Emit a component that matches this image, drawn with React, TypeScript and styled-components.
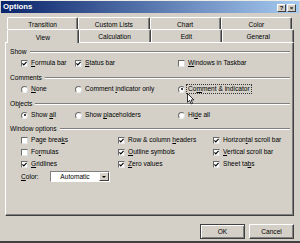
import React from "react";
import styled, { createGlobalStyle, css } from "styled-components";

const FACE = "#d4d0c8";

const GlobalStyle = createGlobalStyle`
  html, body { margin: 0; padding: 0; background: ${FACE}; }
  body {
    font-family: "Liberation Sans", Arial, sans-serif;
    font-size: 6.6px;
    color: #000;
  }
  #root { width: 300px; height: 243px; }
`;

const Window = styled.div`
  width: 300px;
  height: 243px;
  box-sizing: border-box;
  background: ${FACE};
  border-top: 1px solid #ecebe6;
  border-bottom: 2px solid #404040;
  display: flex;
  flex-direction: column;
`;

const TitleBar = styled.div`
  height: 12px;
  margin: 0 1px;
  padding: 0 3px 0 2px;
  background: linear-gradient(to right, #0a246a, #a6caf0);
  display: flex;
  align-items: center;
  justify-content: space-between;
`;

const Title = styled.span`
  color: #fff;
  font-weight: bold;
  font-size: 7.8px;
  line-height: 12px;
`;

const TitleButtons = styled.div`
  display: flex;
  gap: 1px;
  padding-top: 1px;
`;

const TitleButton = styled.div`
  width: 9px;
  height: 8px;
  box-sizing: border-box;
  background: ${FACE};
  border: 1px solid;
  border-color: #fff #404040 #404040 #fff;
  display: flex;
  align-items: center;
  justify-content: center;
  font-size: 6px;
  font-weight: bold;
  line-height: 6px;
  color: #000;
`;

const Body = styled.div`
  flex: 1;
  display: flex;
  flex-direction: column;
  padding: 4px 6px 0 5px;
`;

const TabRow = styled.div<{ $back?: boolean }>`
  display: flex;
  padding-left: 2px;
  padding-right: ${(p) => (p.$back ? 2 : 0)}px;
`;

const Tab = styled.div<{ $back?: boolean; $active?: boolean }>`
  flex: 1;
  height: ${(p) => (p.$back ? 12 : 13)}px;
  box-sizing: border-box;
  display: flex;
  align-items: center;
  justify-content: center;
  padding-top: 1px;
  background: ${FACE};
  border-top: 1px solid #fff;
  border-left: 1px solid #fff;
  border-right: 1px solid #404040;
  box-shadow: inset -1px 0 #808080;
  border-radius: 2px 2px 0 0;
  white-space: nowrap;
  ${(p) =>
    p.$active &&
    css`
      position: relative;
      z-index: 1;
      height: 14px;
      margin-bottom: -1px;
    `}
`;

const Panel = styled.div`
  height: 174px;
  box-sizing: border-box;
  border: 1px solid;
  border-color: #fff #404040 #404040 #fff;
  box-shadow: inset -1px -1px #808080;
  padding: 5px 3px 0 4px;
  display: flex;
  flex-direction: column;
`;

const GroupHeader = styled.div<{ $mt: number }>`
  display: flex;
  align-items: center;
  gap: 3px;
  height: 8px;
  line-height: 8px;
  margin-top: ${(p) => p.$mt}px;
`;

const Etch = styled.div`
  flex: 1;
  border-top: 1px solid #808080;
  border-bottom: 1px solid #fff;
`;

const OptionGrid = styled.div<{ $cols: string; $mt: number }>`
  display: grid;
  grid-template-columns: ${(p) => p.$cols};
  row-gap: 4px;
  padding-left: 11px;
  margin-top: ${(p) => p.$mt}px;
`;

const OptionLabel = styled.div`
  position: relative;
  display: flex;
  align-items: center;
  gap: 2px;
  height: 8px;
  line-height: 8px;
  white-space: nowrap;
`;

const CheckBox = styled.span`
  width: 7px;
  height: 7px;
  box-sizing: border-box;
  background: #fff;
  border: 1px solid;
  border-color: #6a6a6a #d8d8d8 #e8e8e8 #6a6a6a;
  display: flex;
  align-items: center;
  justify-content: center;
  flex: none;
`;

const Radio = styled.span`
  width: 7px;
  height: 7px;
  box-sizing: border-box;
  border-radius: 50%;
  background: #fff;
  border: 1px solid;
  border-color: #6a6a6a #e0e0e0 #f0f0f0 #6a6a6a;
  display: flex;
  align-items: center;
  justify-content: center;
  flex: none;
`;

const RadioDot = styled.span`
  width: 2px;
  height: 2px;
  border-radius: 50%;
  background: #000;
`;

const LabelText = styled.span<{ $focus?: boolean }>`
  padding: 0 1px;
  ${(p) =>
    p.$focus &&
    css`
      outline: 1px dotted #333;
      outline-offset: 0;
    `}
`;

const Cursor = styled.svg`
  position: absolute;
  left: 9px;
  top: 8px;
  z-index: 2;
`;

const ColorRow = styled.div`
  display: flex;
  align-items: center;
  margin-top: 3px;
  padding-left: 11px;
`;

const ColorLabel = styled.span`
  width: 29px;
`;

const Select = styled.div`
  width: 60px;
  height: 11px;
  box-sizing: border-box;
  background: #fff;
  border: 1px solid;
  border-color: #808080 #fff #fff #808080;
  display: flex;
`;

const SelectText = styled.span`
  flex: 1;
  text-align: center;
  line-height: 9px;
`;

const SelectButton = styled.span`
  width: 10px;
  box-sizing: border-box;
  background: ${FACE};
  border: 1px solid;
  border-color: #fff #404040 #404040 #fff;
  display: flex;
  align-items: center;
  justify-content: center;
`;

const Arrow = styled.span`
  width: 0;
  height: 0;
  border-left: 2px solid transparent;
  border-right: 2px solid transparent;
  border-top: 2px solid #000;
`;

const ButtonBar = styled.div`
  display: flex;
  justify-content: flex-end;
  gap: 4px;
  margin-top: 8px;
`;

const Button = styled.button<{ $default?: boolean }>`
  width: 45px;
  height: 15px;
  padding: 0;
  font: inherit;
  color: #000;
  background: ${FACE};
  border: 1px solid;
  border-color: #fff #404040 #404040 #fff;
  box-shadow: inset -1px -1px #808080;
  ${(p) =>
    p.$default &&
    css`
      border-color: #404040;
      box-shadow: inset 1px 1px #fff, inset -1px -1px #808080;
    `}
`;

const Check = () => (
  <CheckBox>
    <svg width="5" height="5" viewBox="0 0 5 5">
      <polyline points="0.4,2.3 1.8,3.8 4.6,0.9" fill="none" stroke="#000" strokeWidth="1.2" />
    </svg>
  </CheckBox>
);

const EmptyCheck = () => <CheckBox />;

type Opt = { label: React.ReactNode; on: boolean };

const CheckOption = ({ label, on }: Opt) => (
  <OptionLabel>
    {on ? <Check /> : <EmptyCheck />}
    <LabelText>{label}</LabelText>
  </OptionLabel>
);

const RadioOption = ({
  label,
  on,
  focus,
  children,
}: Opt & { focus?: boolean; children?: React.ReactNode }) => (
  <OptionLabel>
    <Radio>{on && <RadioDot />}</Radio>
    <LabelText $focus={focus}>{label}</LabelText>
    {children}
  </OptionLabel>
);

const backTabs = ["Transition", "Custom Lists", "Chart", "Color"];
const frontTabs = ["View", "Calculation", "Edit", "General"];

export default function App() {
  return (
    <>
      <GlobalStyle />
      <Window>
        <TitleBar>
          <Title>Options</Title>
          <TitleButtons>
            <TitleButton>?</TitleButton>
            <TitleButton>×</TitleButton>
          </TitleButtons>
        </TitleBar>
        <Body>
          <TabRow $back>
            {backTabs.map((t) => (
              <Tab key={t} $back>
                {t}
              </Tab>
            ))}
          </TabRow>
          <TabRow>
            {frontTabs.map((t, i) => (
              <Tab key={t} $active={i === 0}>
                {t}
              </Tab>
            ))}
          </TabRow>
          <Panel>
            <GroupHeader $mt={0}>
              <span>Show</span>
              <Etch />
            </GroupHeader>
            <OptionGrid $cols="54px 103px 1fr" $mt={3}>
              <CheckOption on label={<><u>F</u>ormula bar</>} />
              <CheckOption on label={<><u>S</u>tatus bar</>} />
              <CheckOption on={false} label={<><u>W</u>indows in Taskbar</>} />
            </OptionGrid>

            <GroupHeader $mt={7}>
              <span>Comments</span>
              <Etch />
            </GroupHeader>
            <OptionGrid $cols="54px 103px 1fr" $mt={3}>
              <RadioOption on={false} label={<><u>N</u>one</>} />
              <RadioOption on={false} label={<>Comment <u>i</u>ndicator only</>} />
              <RadioOption on focus label={<>Co<u>m</u>ment &amp; indicator</>}>
                <Cursor width="8" height="12" viewBox="0 0 8 12">
                  <path
                    d="M0.5 0.5 L0.5 9.3 L2.6 7.4 L4.1 10.9 L5.5 10.3 L4.1 6.9 L6.9 6.9 Z"
                    fill="#fff"
                    stroke="#000"
                    strokeWidth="0.8"
                    strokeLinejoin="round"
                  />
                </Cursor>
              </RadioOption>
            </OptionGrid>

            <GroupHeader $mt={7}>
              <span>Objects</span>
              <Etch />
            </GroupHeader>
            <OptionGrid $cols="54px 103px 1fr" $mt={3}>
              <RadioOption on label={<>Show <u>a</u>ll</>} />
              <RadioOption on={false} label={<>Show <u>p</u>laceholders</>} />
              <RadioOption on={false} label={<>Hi<u>d</u>e all</>} />
            </OptionGrid>

            <GroupHeader $mt={6}>
              <span>Window options</span>
              <Etch />
            </GroupHeader>
            <OptionGrid $cols="97px 95px 1fr" $mt={3}>
              <CheckOption on={false} label={<>Page brea<u>k</u>s</>} />
              <CheckOption on label={<>Row &amp; column <u>h</u>eaders</>} />
              <CheckOption on label={<>Horizon<u>t</u>al scroll bar</>} />
              <CheckOption on={false} label={<>Fo<u>r</u>mulas</>} />
              <CheckOption on label={<><u>O</u>utline symbols</>} />
              <CheckOption on label={<><u>V</u>ertical scroll bar</>} />
              <CheckOption on label={<><u>G</u>ridlines</>} />
              <CheckOption on label={<><u>Z</u>ero values</>} />
              <CheckOption on label={<>Sheet ta<u>b</u>s</>} />
            </OptionGrid>

            <ColorRow>
              <ColorLabel>
                <u>C</u>olor:
              </ColorLabel>
              <Select>
                <SelectText>Automatic</SelectText>
                <SelectButton>
                  <Arrow />
                </SelectButton>
              </Select>
            </ColorRow>
          </Panel>
          <ButtonBar>
            <Button $default>OK</Button>
            <Button>Cancel</Button>
          </ButtonBar>
        </Body>
      </Window>
    </>
  );
}
